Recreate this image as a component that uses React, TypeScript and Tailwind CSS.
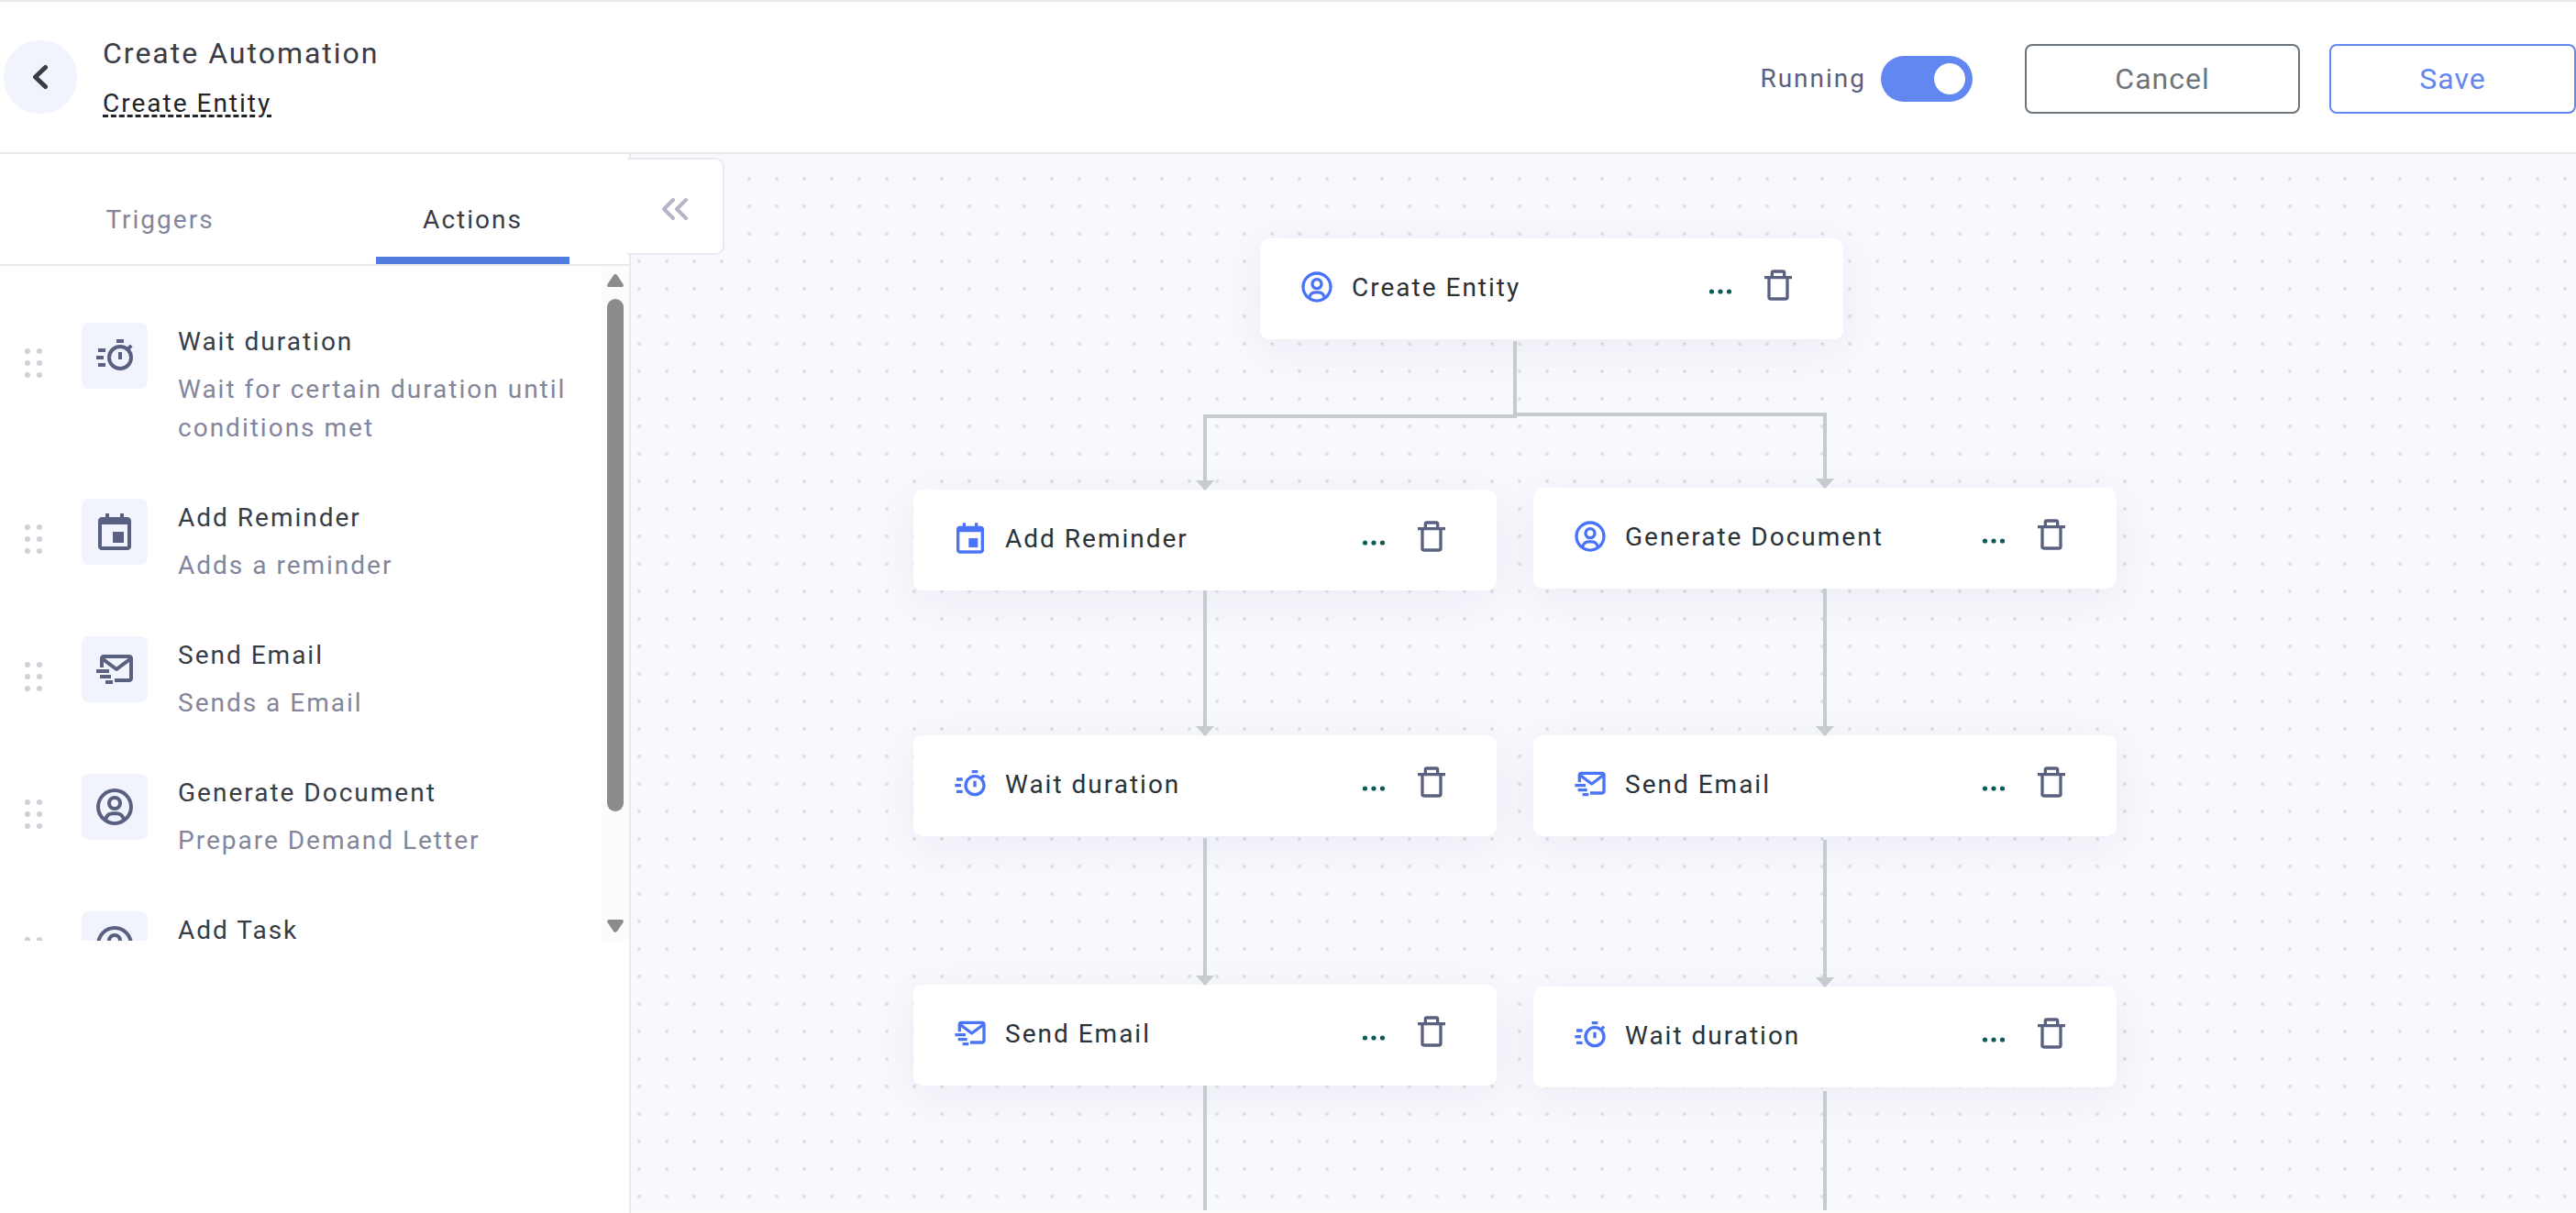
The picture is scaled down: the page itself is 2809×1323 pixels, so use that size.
import React, { useState } from 'react';
import { BiCalendarEvent, BiMailSend, BiUserCircle } from 'react-icons/bi';

type IconType = React.FC<{ className?: string }>;

const StopwatchIcon: IconType = ({ className }) => (
  <svg className={className} viewBox="0 0 24 24" fill="currentColor" aria-hidden="true">
    <circle cx="15" cy="13" r="6" fill="none" stroke="currentColor" strokeWidth="2" />
    <path d="M13 3h4v2h-4zM14 10h2v4h-2zM3 8h4v2H3zM2 12h4v2H2zM3 16h4v2H3z" />
    <path d="M18.6 8.9l2.5-2.5" fill="none" stroke="currentColor" strokeWidth="2" />
  </svg>
);

const TrashIcon: IconType = ({ className }) => (
  <svg className={className} viewBox="0 0 24 24" fill="currentColor" aria-hidden="true">
    <path
      fillRule="evenodd"
      d="M7 6V4a2 2 0 0 1 2-2h6a2 2 0 0 1 2 2v2h4v2h-2v12a2 2 0 0 1-2 2H7a2 2 0 0 1-2-2V8H3V6h4zm2-2v2h6V4H9zM7 8v12h10V8H7z"
    />
  </svg>
);

const actions: { title: string; description?: string; icon: IconType }[] = [
  { title: 'Wait duration', description: 'Wait for certain duration until conditions met', icon: StopwatchIcon },
  { title: 'Add Reminder', description: 'Adds a reminder', icon: BiCalendarEvent },
  { title: 'Send Email', description: 'Sends a Email', icon: BiMailSend },
  { title: 'Generate Document', description: 'Prepare Demand Letter', icon: BiUserCircle },
  { title: 'Add Task', icon: BiUserCircle },
];

const Header: React.FC = () => {
  const [running, setRunning] = useState(true);

  return (
    <header className="flex h-[168px] shrink-0 items-center justify-between border-y-2 border-[#e9e9f0] bg-white pl-1">
      <div className="flex items-center gap-7">
        <button
          type="button"
          aria-label="Back"
          className="flex size-20 items-center justify-center rounded-full bg-[#f1f4fc] text-[#383c45]"
        >
          <svg className="h-7 w-5" viewBox="0 0 20 28" fill="none" stroke="currentColor" strokeWidth="5" aria-hidden="true">
            <path d="M15.500 3.500L4.500 14l11 10.500" strokeLinecap="round" strokeLinejoin="round" />
          </svg>
        </button>
        <div className="flex flex-col items-start gap-2.5">
          <h1 className="text-[32px] leading-[48px] text-[#383c45]">Create Automation</h1>
          <a
            href="#entity"
            className="text-[28px] leading-[42px] text-[#212529] underline decoration-dashed decoration-[3px] underline-offset-[3px]"
          >
            Create Entity
          </a>
        </div>
      </div>

      <div className="flex items-center pt-1">
        <label className="mr-[57px] flex cursor-pointer items-center gap-4 text-[28px] leading-[42px] text-[#5a607f]">
          Running
          <input
            type="checkbox"
            role="switch"
            checked={running}
            onChange={(e) => setRunning(e.target.checked)}
            className="peer sr-only"
          />
          <span className="flex h-[50px] w-[100px] items-center rounded-full bg-gray-300 px-2 peer-checked:justify-end peer-checked:bg-[#6287f0]">
            <span className="size-[34px] rounded-full bg-white" />
          </span>
        </label>
        <button
          type="button"
          className="mr-8 h-[76px] w-[300px] rounded-lg border-2 border-[#6c757d] text-[32px] leading-[48px] tracking-[1px] text-[#6c757d]"
        >
          Cancel
        </button>
        <button
          type="button"
          className="h-[76px] w-[269px] rounded-lg border-2 border-[#6287f0] text-[32px] leading-[48px] tracking-[1px] text-[#6287f0]"
        >
          Save
        </button>
      </div>
    </header>
  );
};

const DragHandle: React.FC = () => (
  <svg className="mt-7 h-8 w-5 shrink-0 cursor-grab text-[#d0d0d9]" viewBox="0 0 20 32" fill="currentColor" aria-hidden="true">
    {[3, 16, 29].map((y) => (
      <React.Fragment key={y}>
        <circle cx="3" cy={y} r="3" />
        <circle cx="16" cy={y} r="3" />
      </React.Fragment>
    ))}
  </svg>
);

const Scrollbar: React.FC = () => (
  <div className="flex w-[30px] shrink-0 flex-col items-center bg-[#fcfcfc] py-[9px] text-[#8b8b8b]" aria-hidden="true">
    <svg className="mb-[13px] h-3.5 w-[18px] shrink-0" viewBox="0 0 18 14" fill="currentColor">
      <path d="M7 1.200Q9-1 11 1.200L17.600 11Q18.500 14 16 14H2Q-.5 14 .4 11Z" />
    </svg>
    <div className="h-[559px] w-[18px] rounded-full bg-[#8b8b8b]" />
    <svg className="mt-auto h-3.5 w-[18px] shrink-0" viewBox="0 0 18 14" fill="currentColor">
      <path d="M7 12.800Q9 15 11 12.800L17.600 3Q18.500 0 16 0H2Q-.5 0 .4 3Z" />
    </svg>
  </div>
);

const Sidebar: React.FC = () => (
  <aside className="relative z-10 flex w-[688px] shrink-0 flex-col border-r-2 border-[#e9e9f0] bg-white pb-[297px]">
    <div role="tablist" className="grid h-[122px] shrink-0 grid-cols-2 justify-items-center border-b-2 border-[#e9e9f0] pl-1">
      <button
        type="button"
        role="tab"
        aria-selected="false"
        className="w-[211px] border-b-8 border-transparent pt-8 text-[28px] leading-[42px] text-[#83859a]"
      >
        Triggers
      </button>
      <button
        type="button"
        role="tab"
        aria-selected="true"
        className="w-[211px] border-b-8 border-[#507cdf] pt-8 text-[28px] leading-[42px] text-[#383c45]"
      >
        Actions
      </button>
    </div>

    <div className="flex min-h-0 flex-1">
      <ul className="flex flex-1 flex-col gap-14 overflow-hidden pt-[62px] pl-[27px]">
        {actions.map(({ title, description, icon: Icon }) => (
          <li key={title} className="flex shrink-0 items-start text-[28px] leading-[42px]">
            <DragHandle />
            <div className="mr-[33px] ml-[42px] flex size-[72px] shrink-0 items-center justify-center rounded-lg bg-[#f1f4fc] text-[#5a607f]">
              <Icon className="size-12" />
            </div>
            <div className="flex flex-col gap-2.5">
              <h2 className="text-[#383c45]">{title}</h2>
              {description && <p className="text-[#83859a]">{description}</p>}
            </div>
          </li>
        ))}
      </ul>
      <Scrollbar />
    </div>

    {/* hangs over the edge of the canvas */}
    <button
      type="button"
      aria-label="Collapse panel"
      className="absolute top-1 left-[684px] flex h-[106px] w-[106px] items-center justify-center rounded-r-[10px] border-y-2 border-r-2 border-[#e9e9f0] bg-white pt-1.5 text-[#b5b5c9]"
    >
      <svg className="h-7 w-8" viewBox="0 0 32 28" fill="none" stroke="currentColor" strokeWidth="4" aria-hidden="true">
        <path d="M14 4L4 14l10 10M28 4L18 14l10 10" strokeLinecap="round" strokeLinejoin="round" />
      </svg>
    </button>
  </aside>
);

const FlowNode: React.FC<{ title: string; icon: IconType; className: string }> = ({ title, icon: Icon, className }) => (
  <article
    className={`absolute flex h-[110px] w-[636px] items-center rounded-[10px] bg-white pr-[51px] pb-1 pl-[42px] shadow-[0_10px_50px_rgba(40,40,80,0.06)] ${className}`}
  >
    <Icon className="mr-[18px] size-10 text-[#4a74f8]" />
    <h3 className="flex-1 pt-0.5 text-[28px] leading-[42px] text-[#2b3237]">{title}</h3>
    <button type="button" aria-label={`${title} options`} className="mr-[30px] text-[#0b5c58]">
      <svg className="h-10 w-[26px]" viewBox="0 0 26 40" fill="currentColor" aria-hidden="true">
        <circle cx="3.500" cy="25" r="2.600" />
        <circle cx="13" cy="25" r="2.600" />
        <circle cx="22.500" cy="25" r="2.600" />
      </svg>
    </button>
    <button type="button" aria-label={`Delete ${title}`} className="pb-1 text-[#5a607f]">
      <TrashIcon className="size-10" />
    </button>
  </article>
);

const Connectors: React.FC = () => (
  <svg className="absolute top-0 left-0 h-full w-[1700px] text-[#c5cbcf]" aria-hidden="true">
    <g fill="none" stroke="currentColor" strokeWidth="4">
      <path d="M964 204V286H626V366" />
      <path d="M966 284H1302V364" />
      <path d="M626 476V634M626 746V906M626 1016V1152" />
      <path d="M1302 474V634M1302 748V908M1302 1022V1152" />
    </g>
    <g fill="currentColor">
      <path d="M616 356h20l-10 11zM616 624h20l-10 11zM616 896h20l-10 11z" />
      <path d="M1292 354h20l-10 11zM1292 624h20l-10 11zM1292 898h20l-10 11z" />
    </g>
  </svg>
);

const Canvas: React.FC = () => (
  <main className="relative mb-[3px] flex-1 overflow-hidden bg-[#f8f9fe] bg-[radial-gradient(circle,#dfe0e4_1.5px,transparent_2.5px)] bg-[length:30px_30px] bg-[position:-6px_12px]">
    <FlowNode title="Create Entity" icon={BiUserCircle} className="top-[92px] left-[686px]" />
    <FlowNode title="Add Reminder" icon={BiCalendarEvent} className="top-[366px] left-[308px]" />
    <FlowNode title="Wait duration" icon={StopwatchIcon} className="top-[634px] left-[308px]" />
    <FlowNode title="Send Email" icon={BiMailSend} className="top-[906px] left-[308px]" />
    <FlowNode title="Generate Document" icon={BiUserCircle} className="top-[364px] left-[984px]" />
    <FlowNode title="Send Email" icon={BiMailSend} className="top-[634px] left-[984px]" />
    <FlowNode title="Wait duration" icon={StopwatchIcon} className="top-[908px] left-[984px]" />
    <Connectors />
  </main>
);

const App: React.FC = () => (
  <div className="flex h-screen flex-col bg-[#fbfbfb] font-['Roboto',sans-serif] tracking-[2px]">
    <Header />
    <div className="flex min-h-0 flex-1">
      <Sidebar />
      <Canvas />
    </div>
  </div>
);

export default App;
